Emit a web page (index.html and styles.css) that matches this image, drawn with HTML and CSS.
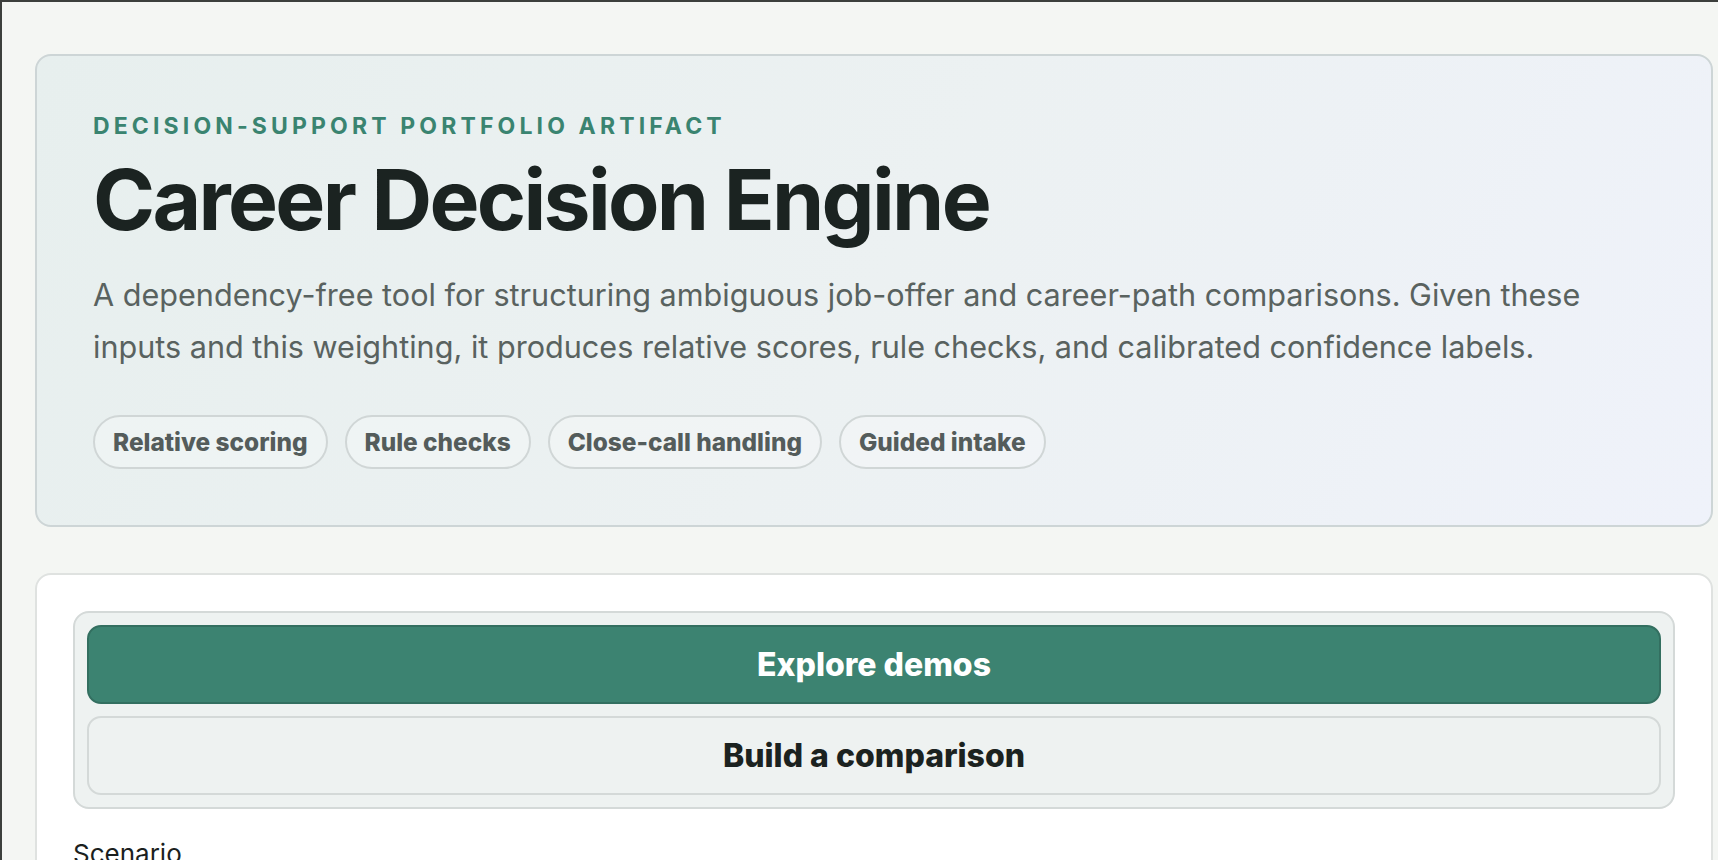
FILE: index.html
```html
<!DOCTYPE html>
<html lang="en">
<head>
    <meta charset="UTF-8">
    <meta name="viewport" content="width=device-width, initial-scale=1.0">
    <title>Career Decision Engine</title>
    <link rel="stylesheet" href="styles.css">
</head>
<body>
    <main class="page">
        <header class="hero">
            <p class="eyebrow">Decision-support portfolio artifact</p>
            <h1 class="title">Career Decision Engine</h1>
            <p class="lede">A dependency-free tool for structuring ambiguous job-offer and career-path comparisons. Given these inputs and this weighting, it produces relative scores, rule checks, and calibrated confidence labels.</p>
            <ul class="chips">
                <li class="chip">Relative scoring</li>
                <li class="chip">Rule checks</li>
                <li class="chip">Close-call handling</li>
                <li class="chip">Guided intake</li>
            </ul>
        </header>

        <section class="panel">
            <div class="mode-switch">
                <button class="mode-btn active" type="button">Explore demos</button>
                <button class="mode-btn" type="button">Build a comparison</button>
            </div>
            <label class="field-label" for="scenario">Scenario</label>
            <select id="scenario" class="field-select">
                <option>Startup offer vs. stable role</option>
                <option>Stay or relocate</option>
                <option>Management vs. IC track</option>
            </select>
        </section>
    </main>
</body>
</html>
```

FILE: styles.css
```css
* {
    box-sizing: border-box;
}
html {
    background-color: #f4f6f3;
}
body {
    margin: 0;
    min-height: 100vh;
    font-family: Inter, "Noto Sans", sans-serif;
    color: #1b2321;
    background-color: #f4f6f3;
    border-top: 2px solid #3c3f3c;
    border-left: 2px solid #3c3f3c;
}
.page {
    padding: 52px 5px 40px 33px;
}

/* hero */
.hero {
    border: 2px solid #cdd5d6;
    border-radius: 16px;
    padding: 56px;
    background: linear-gradient(120deg, #e7efee 0%, #ecf1f2 50%, #eff2fa 100%);
}
.eyebrow {
    margin: 0;
    font-size: 23px;
    line-height: 28px;
    font-weight: 700;
    letter-spacing: 0.18em;
    text-transform: uppercase;
    color: #3a8470;
}
.title {
    margin: 16px 0 0;
    font-size: 84px;
    line-height: 1.05;
    font-weight: 700;
    letter-spacing: -0.032em;
    color: #1b2321;
}
.lede {
    margin: 25px 0 0;
    font-size: 30.6px;
    line-height: 52px;
    color: #59625f;
}
.chips {
    list-style-type: none;
    margin: 42px 0 0;
    padding: 0;
    display: flex;
    flex-wrap: wrap;
    gap: 17px;
}
.chip {
    border: 2px solid #d0d6d6;
    border-radius: 999px;
    padding: 12px 18px;
    font-size: 24.4px;
    line-height: 26px;
    font-weight: 800;
    color: #545c5b;
    background-color: rgba(255, 255, 255, 0.25);
}

/* main panel */
.panel {
    margin-top: 46px;
    border: 2px solid #dfe2e0;
    border-radius: 16px;
    padding: 36px;
    background-color: #ffffff;
}
.mode-switch {
    display: flex;
    flex-direction: column;
    gap: 12px;
    border: 2px solid #d4d9d8;
    border-radius: 16px;
    padding: 12px;
    background-color: #eef2f1;
}
.mode-btn {
    display: block;
    width: 100%;
    border: 2px solid #d4d9d8;
    border-radius: 14px;
    padding: 20px;
    font-family: inherit;
    font-size: 32px;
    line-height: 35px;
    font-weight: 800;
    color: #1b2220;
    background-color: #eef2f1;
    cursor: pointer;
}
.mode-btn.active {
    color: #ffffff;
    background-color: #3c8371;
    border-color: #336f60;
}
.field-label {
    display: block;
    margin-top: 29px;
    font-size: 26px;
    color: #1b1f1e;
}
.field-select {
    margin-top: 10px;
    width: 100%;
    font-family: inherit;
    font-size: 26px;
    padding: 14px;
    border: 2px solid #d4d9d8;
    border-radius: 12px;
    background-color: #ffffff;
}
```
